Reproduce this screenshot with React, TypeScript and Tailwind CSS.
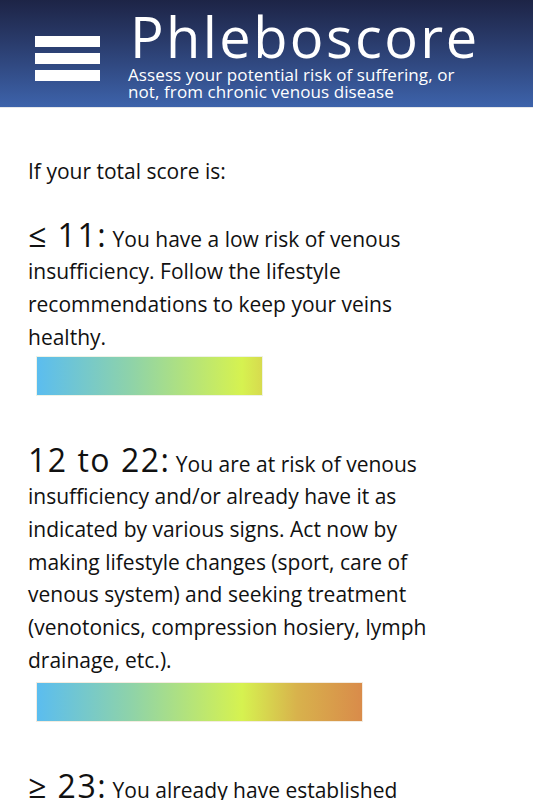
import React from "react";

const font = { fontFamily: '"Open Sans", "Noto Sans", sans-serif' };

export default function App() {
  return (
    <div className="w-[533px] min-h-[800px] bg-white overflow-hidden" style={font}>
      <header className="h-[108px] bg-gradient-to-b from-[#1d2446] to-[#3d63ab] border-b border-[#e5e7eb] flex items-start">
        <div className="flex flex-col gap-[6px] mt-[36px] ml-[35px] w-[65px] shrink-0">
          <div className="h-[11px] bg-white" />
          <div className="h-[11px] bg-white" />
          <div className="h-[11px] bg-white" />
        </div>
        <div className="ml-[30px] flex flex-col whitespace-nowrap">
          <h1 className="text-white text-[56px] leading-[56px] mt-[8px] font-medium tracking-[2.4px]">Phleboscore</h1>
          <p className="text-white text-[17px] leading-[17px] mt-[2px] -ml-[2px] tracking-[0.1px]">
            Assess your potential risk of suffering, or
            <br />
            not, from chronic venous disease
          </p>
        </div>
      </header>
      <main className="pl-[28px] pr-[60px] text-[#111] text-[21px] leading-[32.7px]">
        <p className="mt-[47px]">If your total score is:</p>
        <p className="mt-[35px]">
          <span className="text-[32px] font-medium tracking-[1.5px] leading-[20px]">≤ 11:</span> You have a low risk of venous insufficiency. Follow the lifestyle recommendations to keep your veins healthy.
        </p>
        <div className="ml-[8px] mt-[2px] h-[40px] w-[227px] border border-[#eef3e6] bg-[linear-gradient(to_right,#5bbdef_0px,#8fd3a8_95px,#d6f250_205px,#d8b24c_260px,#d98a4a_327px)]" />
        <p className="mt-[52px]">
          <span className="text-[32px] font-medium tracking-[1.5px] leading-[20px]">12 to 22:</span> You are at risk of venous insufficiency and/or already have it as indicated by various signs. Act now by making lifestyle changes (sport, care of venous system) and seeking treatment (venotonics, compression hosiery, lymph drainage, etc.).
        </p>
        <div className="ml-[8px] mt-[6px] h-[40px] w-[327px] border border-[#f3ece0] bg-[linear-gradient(to_right,#5bbdef_0px,#8fd3a8_95px,#d6f250_205px,#d8b24c_260px,#d98a4a_327px)]" />
        <p className="mt-[52px]">
          <span className="text-[32px] font-medium tracking-[1.5px] leading-[20px]">≥ 23:</span> You already have established venous insufficiency. Consult a doctor as soon as possible.
        </p>
      </main>
    </div>
  );
}
